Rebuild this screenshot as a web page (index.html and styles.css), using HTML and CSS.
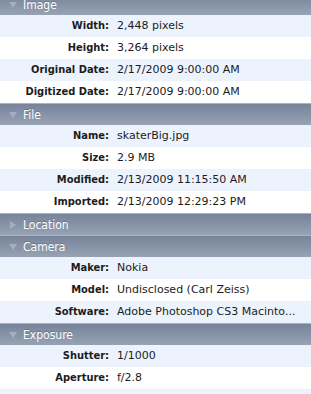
FILE: index.html
```html
<!DOCTYPE html>
<html>
<head>
<meta charset="utf-8">
<link rel="stylesheet" href="styles.css">
</head>
<body>
<div class="panel">
  <div class="section">
    <div class="header"><svg class="tri" width="8" height="8" viewBox="0 0 8 8"><polygon points="0,1 8,1 4,7"/></svg><span>Image</span></div>
    <div class="row"><span class="label">Width:</span><span class="value">2,448 pixels</span></div>
    <div class="row"><span class="label">Height:</span><span class="value">3,264 pixels</span></div>
    <div class="row"><span class="label">Original Date:</span><span class="value">2/17/2009 9:00:00 AM</span></div>
    <div class="row"><span class="label">Digitized Date:</span><span class="value">2/17/2009 9:00:00 AM</span></div>
  </div>
  <div class="section">
    <div class="header"><svg class="tri" width="8" height="8" viewBox="0 0 8 8"><polygon points="0,1 8,1 4,7"/></svg><span>File</span></div>
    <div class="row"><span class="label">Name:</span><span class="value">skaterBig.jpg</span></div>
    <div class="row"><span class="label">Size:</span><span class="value">2.9 MB</span></div>
    <div class="row"><span class="label">Modified:</span><span class="value">2/13/2009 11:15:50 AM</span></div>
    <div class="row"><span class="label">Imported:</span><span class="value">2/13/2009 12:29:23 PM</span></div>
  </div>
  <div class="section">
    <div class="header"><svg class="tri" width="8" height="8" viewBox="0 0 8 8"><polygon points="1,0 7,4 1,8"/></svg><span>Location</span></div>
  </div>
  <div class="section">
    <div class="header"><svg class="tri" width="8" height="8" viewBox="0 0 8 8"><polygon points="0,1 8,1 4,7"/></svg><span>Camera</span></div>
    <div class="row"><span class="label">Maker:</span><span class="value">Nokia</span></div>
    <div class="row"><span class="label">Model:</span><span class="value">Undisclosed (Carl Zeiss)</span></div>
    <div class="row"><span class="label">Software:</span><span class="value">Adobe Photoshop CS3 Macinto...</span></div>
  </div>
  <div class="section">
    <div class="header"><svg class="tri" width="8" height="8" viewBox="0 0 8 8"><polygon points="0,1 8,1 4,7"/></svg><span>Exposure</span></div>
    <div class="row"><span class="label">Shutter:</span><span class="value">1/1000</span></div>
    <div class="row"><span class="label">Aperture:</span><span class="value">f/2.8</span></div>
    <div class="row"><span class="label"></span><span class="value"></span></div>
  </div>
</div>
</body>
</html>
```
FILE: styles.css
```css
html, body {
  margin: 0;
  padding: 0;
  background: #ffffff;
}
body {
  width: 311px;
  height: 394px;
  overflow: hidden;
  font-family: "DejaVu Sans", sans-serif;
}
.panel {
  margin-top: -7px;
  display: flex;
  flex-direction: column;
}
.section {
  display: flex;
  flex-direction: column;
}
.header {
  box-sizing: border-box;
  height: 22px;
  display: flex;
  align-items: center;
  padding-left: 9px;
  background: linear-gradient(#76849a, #97a3b4);
  border-top: 1px solid #aab3c1;
  color: #ffffff;
  font-family: "DejaVu Sans Condensed", "DejaVu Sans", sans-serif;
  font-stretch: condensed;
  font-size: 12px;
  line-height: 22px;
  text-shadow: 0 -1px 0 rgba(60, 70, 90, 0.35);
}
.tri {
  fill: #a6afbd;
  margin-right: 6px;
  flex: none;
}
.row {
  height: 22px;
  display: flex;
  align-items: center;
  gap: 8px;
  font-size: 11px;
  line-height: 22px;
  color: #1c1c1c;
}
.section .row:nth-of-type(odd) {
  background: #ffffff;
}
.section .row:nth-child(even) {
  background: #edf3fd;
}
.label {
  width: 109px;
  flex: none;
  text-align: right;
  font-weight: bold;
  font-family: "DejaVu Sans Condensed", "DejaVu Sans", sans-serif;
  font-stretch: condensed;
  white-space: nowrap;
}
.value {
  white-space: nowrap;
  overflow: hidden;
}
```
